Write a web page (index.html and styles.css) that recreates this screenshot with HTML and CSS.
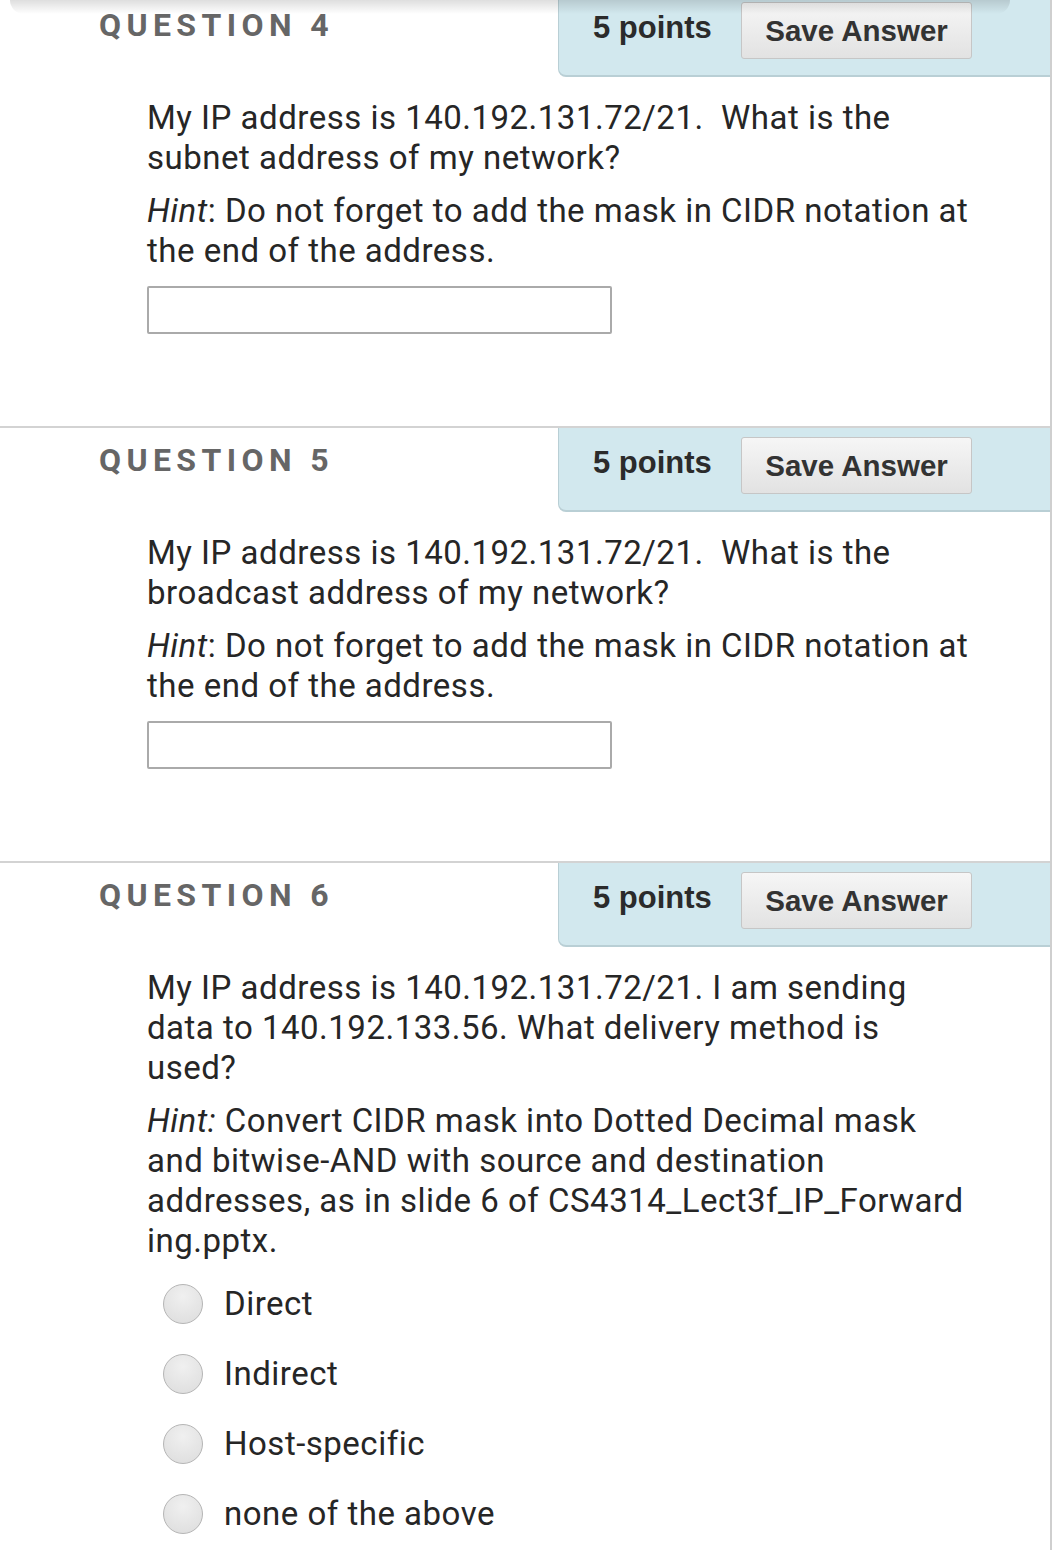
FILE: index.html
```html
<!DOCTYPE html>
<html lang="en">
<head>
<meta charset="utf-8">
<title>Questions</title>
<link rel="stylesheet" href="styles.css">
</head>
<body>
<div class="topshadow"></div>
<div class="page">
  <section class="question q-first">
    <div class="q-head">
      <h3 class="q-title">QUESTION 4</h3>
      <div class="q-points">
        <span class="pts">5 points</span>
        <button class="save">Save Answer</button>
      </div>
    </div>
    <div class="q-body">
      <p>My IP address is 140.192.131.72/21.&nbsp; What is the subnet address of my network?</p>
      <p><em>Hint</em>: Do not forget to add the mask in CIDR notation at the end of the address.</p>
      <input class="answer" type="text">
    </div>
  </section>

  <section class="question">
    <div class="q-head">
      <h3 class="q-title">QUESTION 5</h3>
      <div class="q-points">
        <span class="pts">5 points</span>
        <button class="save">Save Answer</button>
      </div>
    </div>
    <div class="q-body">
      <p>My IP address is 140.192.131.72/21.&nbsp; What is the broadcast address of my network?</p>
      <p><em>Hint</em>: Do not forget to add the mask in CIDR notation at the end of the address.</p>
      <input class="answer" type="text">
    </div>
  </section>

  <section class="question q-last">
    <div class="q-head">
      <h3 class="q-title">QUESTION 6</h3>
      <div class="q-points">
        <span class="pts">5 points</span>
        <button class="save">Save Answer</button>
      </div>
    </div>
    <div class="q-body">
      <p>My IP address is 140.192.131.72/21. I am sending data to 140.192.133.56. What delivery method is used?</p>
      <p class="hint-long"><em>Hint:</em> Convert CIDR mask into Dotted Decimal mask and bitwise-AND with source and destination addresses, as in slide 6 of <span class="file">CS4314_Lect3f_IP_Forward<wbr>ing.pptx.</span></p>
      <ul class="choices">
        <li><span class="radio"></span><span class="lbl">Direct</span></li>
        <li><span class="radio"></span><span class="lbl">Indirect</span></li>
        <li><span class="radio"></span><span class="lbl">Host-specific</span></li>
        <li><span class="radio"></span><span class="lbl">none of the above</span></li>
      </ul>
    </div>
  </section>
</div>
</body>
</html>
```

FILE: styles.css
```css
html, body {
  margin: 0;
  padding: 0;
  background: #fff;
}
body {
  font-family: Roboto, "Noto Sans", sans-serif;
  color: #262626;
  overflow: hidden;
}
.topshadow {
  position: absolute;
  left: 10px;
  top: 0;
  width: 1000px;
  height: 14px;
  background: linear-gradient(to bottom, rgba(0,0,0,0.13), rgba(0,0,0,0));
  border-radius: 0 0 40px 40px;
  z-index: 5;
}
.page {
  width: 1050px;
  border-right: 2px solid #cfcfcf;
  margin-top: -9px;
  min-height: 1600px;
}
.question {
  border-top: 2px solid #d3d3d3;
  height: 433px;
}
.q-last {
  height: auto;
}
.q-head {
  display: flex;
  justify-content: space-between;
  align-items: flex-start;
}
.q-title {
  margin: 0;
  padding: 14px 0 0 99px;
  font-family: Roboto, "Liberation Sans", sans-serif;
  font-weight: 700;
  font-size: 32px;
  line-height: 36px;
  letter-spacing: 5.4px;
  color: #666;
}
.q-points {
  width: 492px;
  height: 84px;
  box-sizing: border-box;
  background: #d2e8ee;
  border-left: 1px solid #b9cfd5;
  border-bottom: 2px solid #b9cfd5;
  border-bottom-left-radius: 8px;
  display: flex;
  align-items: flex-start;
  padding: 9px 0 0 34px;
}
.pts {
  font-family: "Liberation Sans", Arial, sans-serif;
  font-weight: 700;
  font-size: 31px;
  line-height: 40px;
  color: #2b2b2b;
  margin-top: 6px;
  width: 148px;
}
.save {
  width: 231px;
  height: 57px;
  box-sizing: border-box;
  border: 1px solid #c6c6c6;
  border-radius: 3px;
  background: linear-gradient(to bottom, #f6f6f6, #e2e2e2);
  font-family: "Liberation Sans", Arial, sans-serif;
  font-weight: 700;
  font-size: 29.5px;
  color: #333;
  padding: 0;
  text-align: center;
}
.q-body {
  padding: 21px 0 0 147px;
  width: 823px;
}
.q-body p {
  margin: 0 0 13px 0;
  font-size: 33px;
  line-height: 40px;
  letter-spacing: 0.5px;
}
.hint-long {
  margin-bottom: 8px !important;
}
.q-body em {
  font-style: italic;
}
.answer {
  display: block;
  margin-top: 15px;
  width: 465px;
  height: 48px;
  box-sizing: border-box;
  border: 2px solid #aaa;
  border-radius: 2px;
  background: #fff;
}
.choices {
  list-style: none;
  margin: 0;
  padding: 0 0 0 16px;
}
.choices li {
  display: flex;
  align-items: center;
  height: 70px;
}
.radio {
  width: 40px;
  height: 40px;
  box-sizing: border-box;
  border-radius: 50%;
  border: 1px solid #b5b5b5;
  background: radial-gradient(circle at 50% 30%, #f0f0f0, #dcdcdc);
  margin-right: 21px;
  flex: none;
}
.lbl {
  font-size: 33px;
  line-height: 40px;
  letter-spacing: 0.5px;
  color: #262626;
}
```
